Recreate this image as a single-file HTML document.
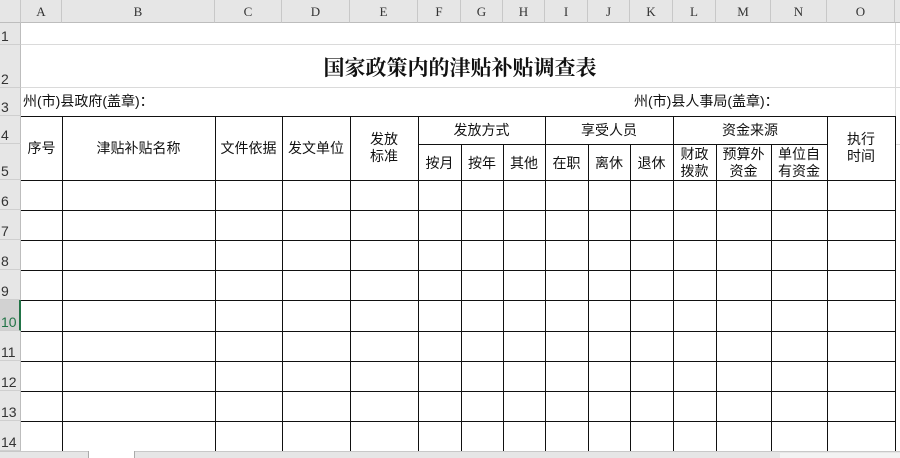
<!DOCTYPE html><html><head><meta charset="utf-8"><style>
body{margin:0;width:900px;height:458px;overflow:hidden;background:#fff;font-family:"Liberation Sans","Noto Sans CJK SC",sans-serif;position:relative}
div{position:absolute;box-sizing:border-box}
.ch{top:0;height:23px;font:13px "Liberation Serif","Noto Serif CJK SC",serif;color:#333;text-align:center;line-height:24px;border-right:1px solid #c8c8c8;border-bottom:1px solid #bdbdbd;background:#e6e6e6}
.rh{left:0;width:21px;font:14px "Liberation Sans",sans-serif;color:#333;background:#e6e6e6;border-bottom:1px solid #cfcfcf;border-right:1px solid #bdbdbd;padding-left:1px;display:flex;align-items:flex-end;padding-bottom:0}
.gl{background:#dadada}
.bl{background:#111}
.t{font-size:14px;color:#111;text-align:center;line-height:17px;white-space:nowrap}
</style></head><body>
<div class="ch" style="left:0;width:21px"></div>
<div class="ch" style="left:21px;width:41px">A</div>
<div class="ch" style="left:62px;width:153px">B</div>
<div class="ch" style="left:215px;width:67px">C</div>
<div class="ch" style="left:282px;width:68px">D</div>
<div class="ch" style="left:350px;width:68px">E</div>
<div class="ch" style="left:418px;width:43px">F</div>
<div class="ch" style="left:461px;width:42px">G</div>
<div class="ch" style="left:503px;width:42px">H</div>
<div class="ch" style="left:545px;width:43px">I</div>
<div class="ch" style="left:588px;width:42px">J</div>
<div class="ch" style="left:630px;width:43px">K</div>
<div class="ch" style="left:673px;width:43px">L</div>
<div class="ch" style="left:716px;width:55px">M</div>
<div class="ch" style="left:771px;width:56px">N</div>
<div class="ch" style="left:827px;width:68px">O</div>
<div class="ch" style="left:895px;width:5px;border-right:none"></div>
<div class="rh" style="top:23px;height:22px">1</div>
<div class="rh" style="top:45px;height:43px">2</div>
<div class="rh" style="top:88px;height:28px">3</div>
<div class="rh" style="top:116px;height:28px">4</div>
<div class="rh" style="top:144px;height:36px">5</div>
<div class="rh" style="top:180px;height:30px">6</div>
<div class="rh" style="top:210px;height:30px">7</div>
<div class="rh" style="top:240px;height:30px">8</div>
<div class="rh" style="top:270px;height:30px">9</div>
<div class="rh" style="top:300px;height:31px;background:#d2d2d2;color:#217346;border-right:2px solid #217346">10</div>
<div class="rh" style="top:331px;height:30px">11</div>
<div class="rh" style="top:361px;height:30px">12</div>
<div class="rh" style="top:391px;height:30px">13</div>
<div class="rh" style="top:421px;height:30px">14</div>
<div class="gl" style="left:21px;top:44px;width:879px;height:1px"></div>
<div class="gl" style="left:21px;top:87px;width:879px;height:1px"></div>
<div class="gl" style="left:895px;top:23px;width:1px;height:93px"></div>
<div class="gl" style="left:895px;top:144px;width:5px;height:1px"></div>
<div class="bl" style="left:21px;top:116px;width:875px;height:1px"></div>
<div class="bl" style="left:418px;top:144px;width:409px;height:1px"></div>
<div class="bl" style="left:21px;top:180px;width:875px;height:1px"></div>
<div class="bl" style="left:21px;top:210px;width:875px;height:1px"></div>
<div class="bl" style="left:21px;top:240px;width:875px;height:1px"></div>
<div class="bl" style="left:21px;top:270px;width:875px;height:1px"></div>
<div class="bl" style="left:21px;top:300px;width:875px;height:1px"></div>
<div class="bl" style="left:21px;top:331px;width:875px;height:1px"></div>
<div class="bl" style="left:21px;top:361px;width:875px;height:1px"></div>
<div class="bl" style="left:21px;top:391px;width:875px;height:1px"></div>
<div class="bl" style="left:21px;top:421px;width:875px;height:1px"></div>
<div class="bl" style="left:62px;top:116px;width:1px;height:335px"></div>
<div class="bl" style="left:215px;top:116px;width:1px;height:335px"></div>
<div class="bl" style="left:282px;top:116px;width:1px;height:335px"></div>
<div class="bl" style="left:350px;top:116px;width:1px;height:335px"></div>
<div class="bl" style="left:418px;top:116px;width:1px;height:335px"></div>
<div class="bl" style="left:461px;top:144px;width:1px;height:307px"></div>
<div class="bl" style="left:503px;top:144px;width:1px;height:307px"></div>
<div class="bl" style="left:545px;top:116px;width:1px;height:335px"></div>
<div class="bl" style="left:588px;top:144px;width:1px;height:307px"></div>
<div class="bl" style="left:630px;top:144px;width:1px;height:307px"></div>
<div class="bl" style="left:673px;top:116px;width:1px;height:335px"></div>
<div class="bl" style="left:716px;top:144px;width:1px;height:307px"></div>
<div class="bl" style="left:771px;top:144px;width:1px;height:307px"></div>
<div class="bl" style="left:827px;top:116px;width:1px;height:335px"></div>
<div class="bl" style="left:895px;top:116px;width:1px;height:335px"></div>
<div class="t" style="left:215px;top:55px;width:490px;font-size:21px;font-weight:bold;line-height:26px;font-family:'Liberation Serif','Noto Serif CJK SC',serif">国家政策内的津贴补贴调查表</div>
<div class="t" style="left:23px;top:93px;text-align:left">州(市)县政府(盖章)：</div>
<div class="t" style="left:634px;top:93px;text-align:left">州(市)县人事局(盖章)：</div>
<div class="t" style="left:21px;top:140px;width:41px">序号</div>
<div class="t" style="left:62px;top:140px;width:153px">津贴补贴名称</div>
<div class="t" style="left:215px;top:140px;width:67px">文件依据</div>
<div class="t" style="left:282px;top:140px;width:68px">发文单位</div>
<div class="t" style="left:350px;top:131px;width:68px">发放<br>标准</div>
<div class="t" style="left:418px;top:122px;width:127px">发放方式</div>
<div class="t" style="left:545px;top:122px;width:128px">享受人员</div>
<div class="t" style="left:673px;top:122px;width:154px">资金来源</div>
<div class="t" style="left:827px;top:131px;width:68px">执行<br>时间</div>
<div class="t" style="left:418px;top:155px;width:43px">按月</div>
<div class="t" style="left:461px;top:155px;width:42px">按年</div>
<div class="t" style="left:503px;top:155px;width:42px">其他</div>
<div class="t" style="left:545px;top:155px;width:43px">在职</div>
<div class="t" style="left:588px;top:155px;width:42px">离休</div>
<div class="t" style="left:630px;top:155px;width:43px">退休</div>
<div class="t" style="left:673px;top:146px;width:43px">财政<br>拨款</div>
<div class="t" style="left:716px;top:146px;width:55px">预算外<br>资金</div>
<div class="t" style="left:771px;top:146px;width:56px">单位自<br>有资金</div>
<div style="left:0;top:451px;width:900px;height:7px;background:#e6e6e6;border-top:1px solid #c8c8c8"></div>
<div style="left:0;top:451px;width:89px;height:7px;border-right:1px solid #aaa"></div>
<div style="left:89px;top:451px;width:46px;height:7px;background:#fff;border-right:1px solid #aaa"></div>
<div style="left:780px;top:453px;width:120px;height:5px;background:#f3f3f3"></div>
</body></html>
